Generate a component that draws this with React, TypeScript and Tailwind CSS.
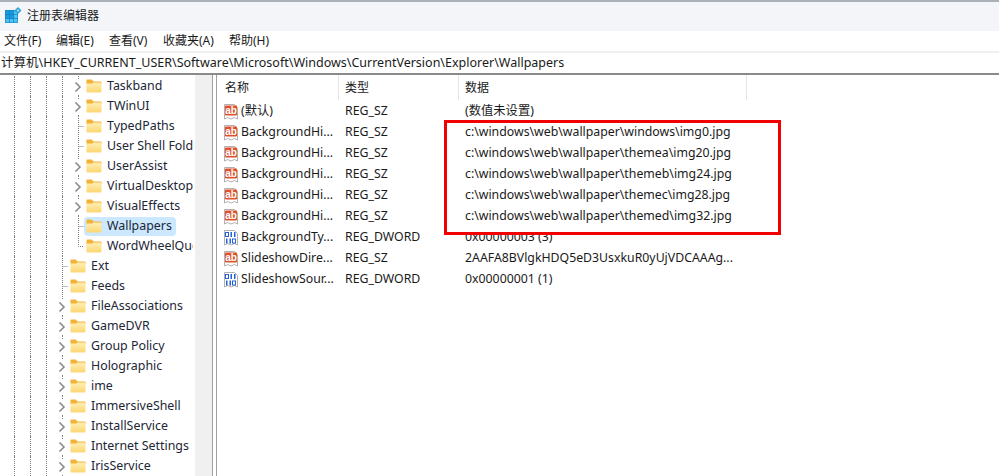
import React from 'react';

const menus = ['文件(F)', '编辑(E)', '查看(V)', '收藏夹(A)', '帮助(H)'];

type TreeRow = { label: string; depth: 1 | 2; kind: 'open' | 'leaf' | 'last'; selected?: boolean };

const treeRows: TreeRow[] = [
  { label: 'Taskband', depth: 2, kind: 'open' },
  { label: 'TWinUI', depth: 2, kind: 'open' },
  { label: 'TypedPaths', depth: 2, kind: 'leaf' },
  { label: 'User Shell Folders', depth: 2, kind: 'leaf' },
  { label: 'UserAssist', depth: 2, kind: 'open' },
  { label: 'VirtualDesktops', depth: 2, kind: 'open' },
  { label: 'VisualEffects', depth: 2, kind: 'open' },
  { label: 'Wallpapers', depth: 2, kind: 'leaf', selected: true },
  { label: 'WordWheelQuery', depth: 2, kind: 'last' },
  { label: 'Ext', depth: 1, kind: 'leaf' },
  { label: 'Feeds', depth: 1, kind: 'leaf' },
  { label: 'FileAssociations', depth: 1, kind: 'open' },
  { label: 'GameDVR', depth: 1, kind: 'open' },
  { label: 'Group Policy', depth: 1, kind: 'open' },
  { label: 'Holographic', depth: 1, kind: 'open' },
  { label: 'ime', depth: 1, kind: 'open' },
  { label: 'ImmersiveShell', depth: 1, kind: 'open' },
  { label: 'InstallService', depth: 1, kind: 'open' },
  { label: 'Internet Settings', depth: 1, kind: 'open' },
  { label: 'IrisService', depth: 1, kind: 'open' },
];

const values = [
  { name: '(默认)', type: 'REG_SZ', data: '(数值未设置)', bin: false },
  { name: 'BackgroundHi...', type: 'REG_SZ', data: 'c:\\windows\\web\\wallpaper\\windows\\img0.jpg', bin: false },
  { name: 'BackgroundHi...', type: 'REG_SZ', data: 'c:\\windows\\web\\wallpaper\\themea\\img20.jpg', bin: false },
  { name: 'BackgroundHi...', type: 'REG_SZ', data: 'c:\\windows\\web\\wallpaper\\themeb\\img24.jpg', bin: false },
  { name: 'BackgroundHi...', type: 'REG_SZ', data: 'c:\\windows\\web\\wallpaper\\themec\\img28.jpg', bin: false },
  { name: 'BackgroundHi...', type: 'REG_SZ', data: 'c:\\windows\\web\\wallpaper\\themed\\img32.jpg', bin: false },
  { name: 'BackgroundTy...', type: 'REG_DWORD', data: '0x00000003 (3)', bin: true },
  { name: 'SlideshowDire...', type: 'REG_SZ', data: '2AAFA8BVlgkHDQ5eD3UsxkuR0yUjVDCAAAg...', bin: false },
  { name: 'SlideshowSour...', type: 'REG_DWORD', data: '0x00000001 (1)', bin: true },
];

const AppIcon = () => (
  <svg width="17" height="17" viewBox="0 0 17 17" className="shrink-0">
    <rect x="0" y="3" width="13" height="13" fill="#0f7fc4" />
    {[0, 1, 2].map((c) =>
      [0, 1, 2].map((r) => (
        <rect
          key={`${c}-${r}`}
          x={0.5 + c * 4.2}
          y={3.5 + r * 4.2}
          width="3.6"
          height="3.6"
          fill={r === 2 || c === 2 ? '#4cc2f1' : '#1a9ad9'}
        />
      ))
    )}
    <path d="M13 0l3.5 3.5L13 7 9.5 3.5z" fill="#2a9fd8" />
    <path d="M13 2l1.5 1.5L13 5l-1.5-1.5z" fill="#9fdcf7" />
  </svg>
);

const Folder = () => (
  <svg width="16" height="14" viewBox="0 0 17 14" preserveAspectRatio="none" className="shrink-0">
    <defs>
      <linearGradient id="folderBody" x1="0" y1="0" x2="0" y2="1">
        <stop offset="0" stopColor="#ffeeb4" />
        <stop offset="1" stopColor="#fcd770" />
      </linearGradient>
    </defs>
    <path d="M0.5 1.5Q0.5 0.5 1.5 0.5H6L8 2.5H15.5Q16.5 2.5 16.5 3.5V5H0.5z" fill="#f2b233" />
    <path d="M0.5 4.5L6.5 4.5L8 3.5H15.5Q16.5 3.5 16.5 4.5V12.5Q16.5 13.5 15.5 13.5H1.5Q0.5 13.5 0.5 12.5z" fill="url(#folderBody)" />
  </svg>
);

// elbow of the tree: chevron on expandable keys, dotted tee on the others
const TreeNode = ({ kind }: { kind: TreeRow['kind'] }) => (
  <svg width="14" height="20" viewBox="0 0 14 20" className="shrink-0">
    {kind === 'open' ? (
      <>
        <path d="M8.5 0V3M8.5 19V20" stroke="#808080" strokeDasharray="1 1" fill="none" />
        <path d="M5.5 6.5L10 11L5.5 15.5" stroke="#8c8c8c" strokeWidth="1.6" fill="none" />
      </>
    ) : (
      <path
        d={kind === 'last' ? 'M8.5 0V10.5H14' : 'M8.5 0V20M8.5 10.5H14'}
        stroke="#808080"
        strokeDasharray="1 1"
        fill="none"
      />
    )}
  </svg>
);

const Guide = () => (
  <div className="w-4 h-5 shrink-0 flex justify-center">
    <div className="h-full border-l border-dotted border-[#808080]" />
  </div>
);

const ValueIcon = ({ bin }: { bin: boolean }) => (
  <svg width="16" height="16" viewBox="0 0 16 16" className="shrink-0">
    <path d="M1.5 0.5H11.5L14.5 3.5V15L11.5 13.5L8 15L4.5 13.5L1.5 15z" fill="#fff" stroke="#b0b0b0" />
    {bin ? (
      <g fill="#2460d8">
        <rect x="2.5" y="2.5" width="3" height="4" fill="none" stroke="#2460d8" />
        <rect x="7.5" y="2" width="1.5" height="5" />
        <rect x="11" y="2" width="1.5" height="5" />
        <rect x="3" y="8.5" width="1.5" height="5" />
        <rect x="6.5" y="8.5" width="1.5" height="5" />
        <rect x="9.5" y="9" width="3" height="4" fill="none" stroke="#2460d8" />
      </g>
    ) : (
      <>
        <rect x="2" y="1.5" width="12" height="10" rx="1" fill="#e0502a" />
        <text x="8" y="9.8" textAnchor="middle" fontSize="10" fontWeight="700" fill="#fff" fontFamily="Liberation Sans, sans-serif">
          ab
        </text>
      </>
    )}
  </svg>
);

export default function App() {
  return (
    <div className="relative w-[999px] h-[476px] overflow-hidden flex flex-col bg-white text-[#1a1a1a] text-[12.3px] [font-family:'Noto_Sans','Noto_Sans_CJK_SC',sans-serif]">
      {/* Title bar */}
      <div className="h-[31px] shrink-0 flex items-center gap-[5px] pl-[5px] pb-[2px] bg-[#f3f5f8] border-t-2 border-[#a9b0b6]">
        <AppIcon />
        <span className="text-xs">注册表编辑器</span>
      </div>

      {/* Menu */}
      <div className="h-[20px] shrink-0 flex items-center pl-1 text-xs">
        {menus.map((m, i) => (
          <span key={m} className={['w-[52px]', 'w-[53px]', 'w-[54px]', 'w-[66px]', 'w-auto'][i]}>
            {m}
          </span>
        ))}
      </div>

      {/* Address bar */}
      <div className="h-[2px] shrink-0 bg-[#f0f0f0]" />
      <div className="h-[20px] shrink-0 flex items-center pl-px whitespace-nowrap text-[12.5px]">
        计算机\HKEY_CURRENT_USER\Software\Microsoft\Windows\CurrentVersion\Explorer\Wallpapers
      </div>
      <div className="h-[2px] shrink-0 bg-[#8a8a8a]" />

      <div className="flex-1 flex min-h-0">
        {/* Key tree */}
        <div className="w-[193px] shrink-0 overflow-hidden pl-[6px] pt-px text-[12.4px]">
          {treeRows.map((row) => (
            <div key={row.label} className="h-5 flex items-center whitespace-nowrap">
              <Guide />
              <Guide />
              <Guide />
              {row.depth === 2 && <Guide />}
              <TreeNode kind={row.kind} />
              <div
                className={`h-[19px] flex items-center gap-[5px] pl-[2px] pr-1 rounded-sm text-[#1c2636] ${
                  row.selected ? 'bg-[#cce8ff]' : ''
                }`}
              >
                <Folder />
                <span>{row.label}</span>
              </div>
            </div>
          ))}
        </div>
        <div className="w-[2px] shrink-0" />
        <div className="w-[17px] shrink-0 bg-[#f0f0f0]" />
        <div className="w-[5px] shrink-0 border-x border-[#a0a0a0]" />

        {/* Value list */}
        <div className="flex-1 min-w-0">
          <div className="h-[25px] flex items-stretch text-xs">
            <div className="w-[122px] pl-[8px] flex items-center border-r border-[#e5e5e5]">名称</div>
            <div className="w-[120px] pl-[6px] flex items-center border-r border-[#e5e5e5]">类型</div>
            <div className="w-[288px] pl-[6px] flex items-center border-r border-[#e5e5e5]">数据</div>
          </div>
          <div className="pt-px">
            {values.map((v, i) => (
              <div key={i} className="h-[21px] flex items-center whitespace-nowrap">
                <div className="w-[121px] pl-[6px] flex items-center gap-[2px]">
                  <ValueIcon bin={v.bin} />
                  <span>{v.name}</span>
                </div>
                <div className="w-[120px] pl-[7px]">{v.type}</div>
                <div className="pl-[7px]">{v.data}</div>
              </div>
            ))}
          </div>
        </div>
      </div>

      {/* Red annotation box drawn over the screenshot */}
      <div className="absolute left-[444px] top-[120px] w-[337px] h-[115px] border-[3px] border-[#f00000]" />
    </div>
  );
}
